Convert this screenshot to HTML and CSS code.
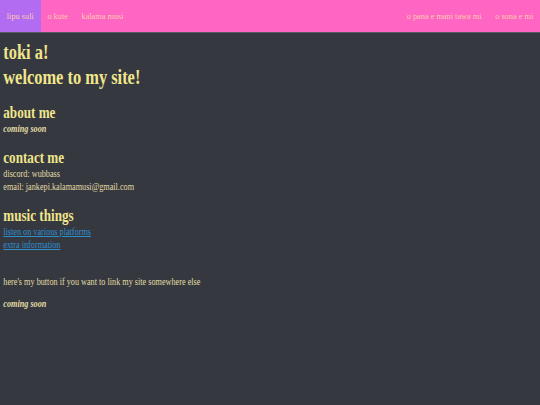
FILE: index.html
```html
<!DOCTYPE html>
<html>
<head>
<meta charset="utf-8">
<link rel="stylesheet" href="styles.css">
</head>
<body>
<nav class="nav">
  <div class="nav-left">
    <a class="nav-item active">lipu suli</a>
    <a class="nav-item">o kute</a>
    <a class="nav-item">kalama musi</a>
  </div>
  <div class="nav-right">
    <a class="nav-item">o pana e mani tawa mi</a>
    <a class="nav-item">o sona e mi</a>
  </div>
</nav>
<main class="content">
  <h1 class="title">toki a!<br>welcome to my site!</h1>
  <h2 class="section first">about me</h2>
  <p class="soon">coming soon</p>
  <h2 class="section">contact me</h2>
  <p class="text">discord: wubbass<br>email: jankepi.kalamamusi@gmail.com</p>
  <h2 class="section">music things</h2>
  <p class="text"><a class="link">listen on various platforms</a><br><a class="link">extra information</a></p>
  <p class="text button-note">here's my button if you want to link my site somewhere else</p>
  <p class="soon last">coming soon</p>
</main>
</body>
</html>
```
FILE: styles.css
```css
html {
  background: #363840;
}
html, body {
  margin: 0;
  padding: 0;
  height: 100%;
}
body {
  font-family: "Liberation Serif", "Times New Roman", serif;
  color: #e2dca4;
}
.nav {
  display: flex;
  justify-content: space-between;
  background: #ff66c4;
  height: 32px;
  border-bottom: 1px solid #5a5862;
}
.nav-left, .nav-right {
  display: flex;
}
.nav-item {
  display: flex;
  align-items: center;
  padding: 0 6.8px;
  font-size: 8.3px;
  color: #ffc9ac;
}
.nav-item.active {
  background: #b16cf2;
}
.content {
  padding: 0 4px;
  transform: scaleX(0.82);
  transform-origin: 0 0;
}
.title {
  margin: 7px 0 0;
  font-size: 20px;
  line-height: 25px;
  font-weight: bold;
  color: #f0e68c;
}
.section {
  margin: 14px 0 0;
  font-size: 16px;
  line-height: 18px;
  font-weight: bold;
  color: #f0e68c;
}
.section.first {
  margin-top: 13.6px;
}
.soon {
  margin: 0;
  font-size: 10px;
  font-style: italic;
  font-weight: bold;
  line-height: 13px;
}
.text {
  margin: 0;
  font-size: 10px;
  line-height: 13px;
}
.link {
  color: #2f8fcc;
  text-decoration: underline;
}
.button-note {
  margin-top: 24.5px;
}
.soon.last {
  margin-top: 9px;
}
```
